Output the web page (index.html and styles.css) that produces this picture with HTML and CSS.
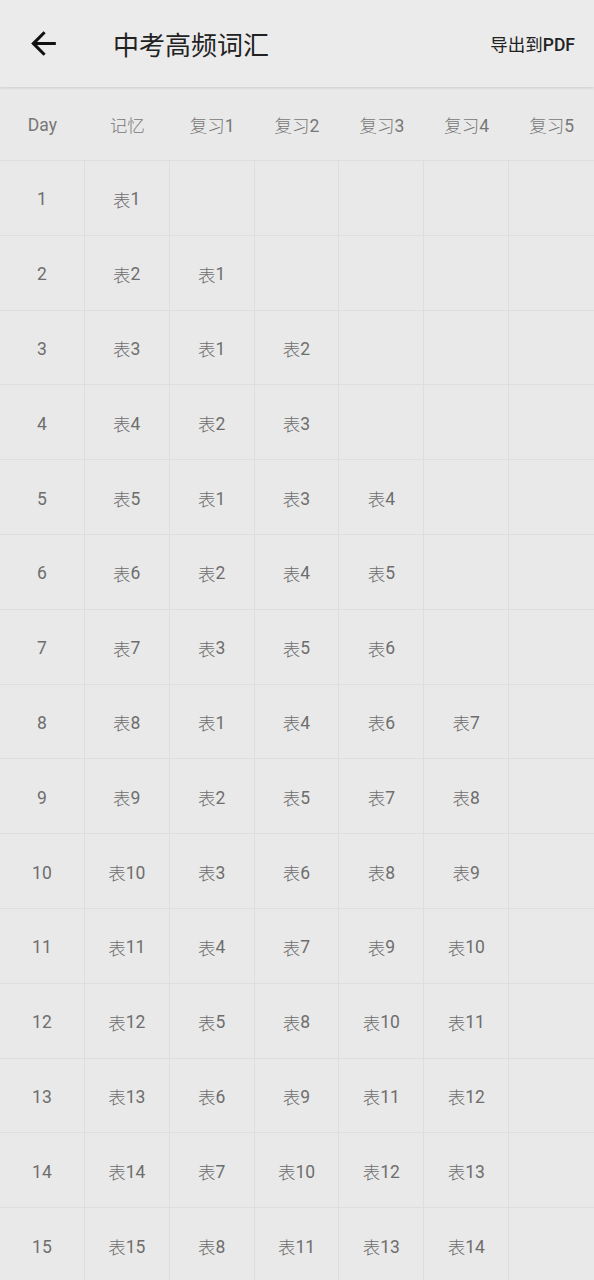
FILE: index.html
```html
<!DOCTYPE html>
<html lang="zh">
<head>
    <meta charset="UTF-8">
    <meta name="viewport" content="width=device-width, initial-scale=1.0">
    <title>中考高频词汇</title>
    <link rel="stylesheet" href="styles.css">
</head>
<body>
    <div class="toolbar">
        <button class="back-btn" type="button">
            <svg viewBox="0 0 24 24" width="37" height="37"><path d="M20 11H7.83l5.59-5.59L12 4l-8 8 8 8 1.41-1.41L7.83 13H20v-2z" fill="#111"/></svg>
        </button>
        <h1 class="title">中考高频词汇</h1>
        <span class="export">导出到<b>PDF</b></span>
    </div>

    <div class="table-head">
        <div>Day</div>
        <div><span class="cjk">记忆</span></div>
        <div><span class="cjk">复习</span>1</div>
        <div><span class="cjk">复习</span>2</div>
        <div><span class="cjk">复习</span>3</div>
        <div><span class="cjk">复习</span>4</div>
        <div><span class="cjk">复习</span>5</div>
    </div>

    <div class="table-body" id="tableBody"></div>

    <script>
        // 每天: 记忆表 + 复习表
        var plan = [
            [1],
            [2, 1],
            [3, 1, 2],
            [4, 2, 3],
            [5, 1, 3, 4],
            [6, 2, 4, 5],
            [7, 3, 5, 6],
            [8, 1, 4, 6, 7],
            [9, 2, 5, 7, 8],
            [10, 3, 6, 8, 9],
            [11, 4, 7, 9, 10],
            [12, 5, 8, 10, 11],
            [13, 6, 9, 11, 12],
            [14, 7, 10, 12, 13],
            [15, 8, 11, 13, 14]
        ];
        var body = document.getElementById('tableBody');
        plan.forEach(function(row, i) {
            for (var c = 0; c < 7; c++) {
                var cell = document.createElement('div');
                cell.className = 'cell';
                if (c === 0) {
                    cell.textContent = i + 1;
                } else if (row[c - 1]) {
                    cell.innerHTML = '<span class="cjk">表</span>' + row[c - 1];
                }
                body.appendChild(cell);
            }
        });
    </script>
</body>
</html>
```

FILE: styles.css
```css
body {
    margin: 0;
    width: 594px;
    height: 1280px;
    overflow: hidden;
    background-color: #e9e9e9;
    font-family: Roboto, "Noto Sans CJK SC", sans-serif;
}
.toolbar {
    position: relative;
    z-index: 1;
    display: flex;
    align-items: center;
    height: 87px;
    background-color: #ebebeb;
    box-shadow: 0 1px 3px rgba(0,0,0,0.12);
}
.back-btn {
    display: flex;
    align-items: center;
    padding: 0 0 0 25px;
    border: none;
    background: none;
    width: 113px;
    height: 87px;
}
.title {
    flex: 1;
    margin: 0;
    font-size: 26px;
    font-weight: normal;
    color: #222;
}
.export {
    margin-right: 19px;
    font-size: 17.5px;
    color: #222;
}
.export b {
    font-weight: 500;
}
.cjk {
    font-weight: 300;
}
.table-head {
    display: grid;
    grid-template-columns: repeat(7, 1fr);
    height: 74px;
    padding-top: 2px;
    box-sizing: border-box;
    align-items: center;
    border-bottom: 1px solid #dedede;
    font-size: 17.5px;
    color: #777;
    text-align: center;
}
.table-body {
    display: grid;
    grid-template-columns: repeat(7, 1fr);
    grid-auto-rows: 74.8px;
}
.cell {
    display: flex;
    align-items: center;
    justify-content: center;
    padding-top: 3px;
    border-right: 1px solid #dedede;
    border-bottom: 1px solid #dedede;
    font-size: 17.5px;
    color: #6e6e6e;
}
.cell:nth-child(7n) {
    border-right: none;
}
```
